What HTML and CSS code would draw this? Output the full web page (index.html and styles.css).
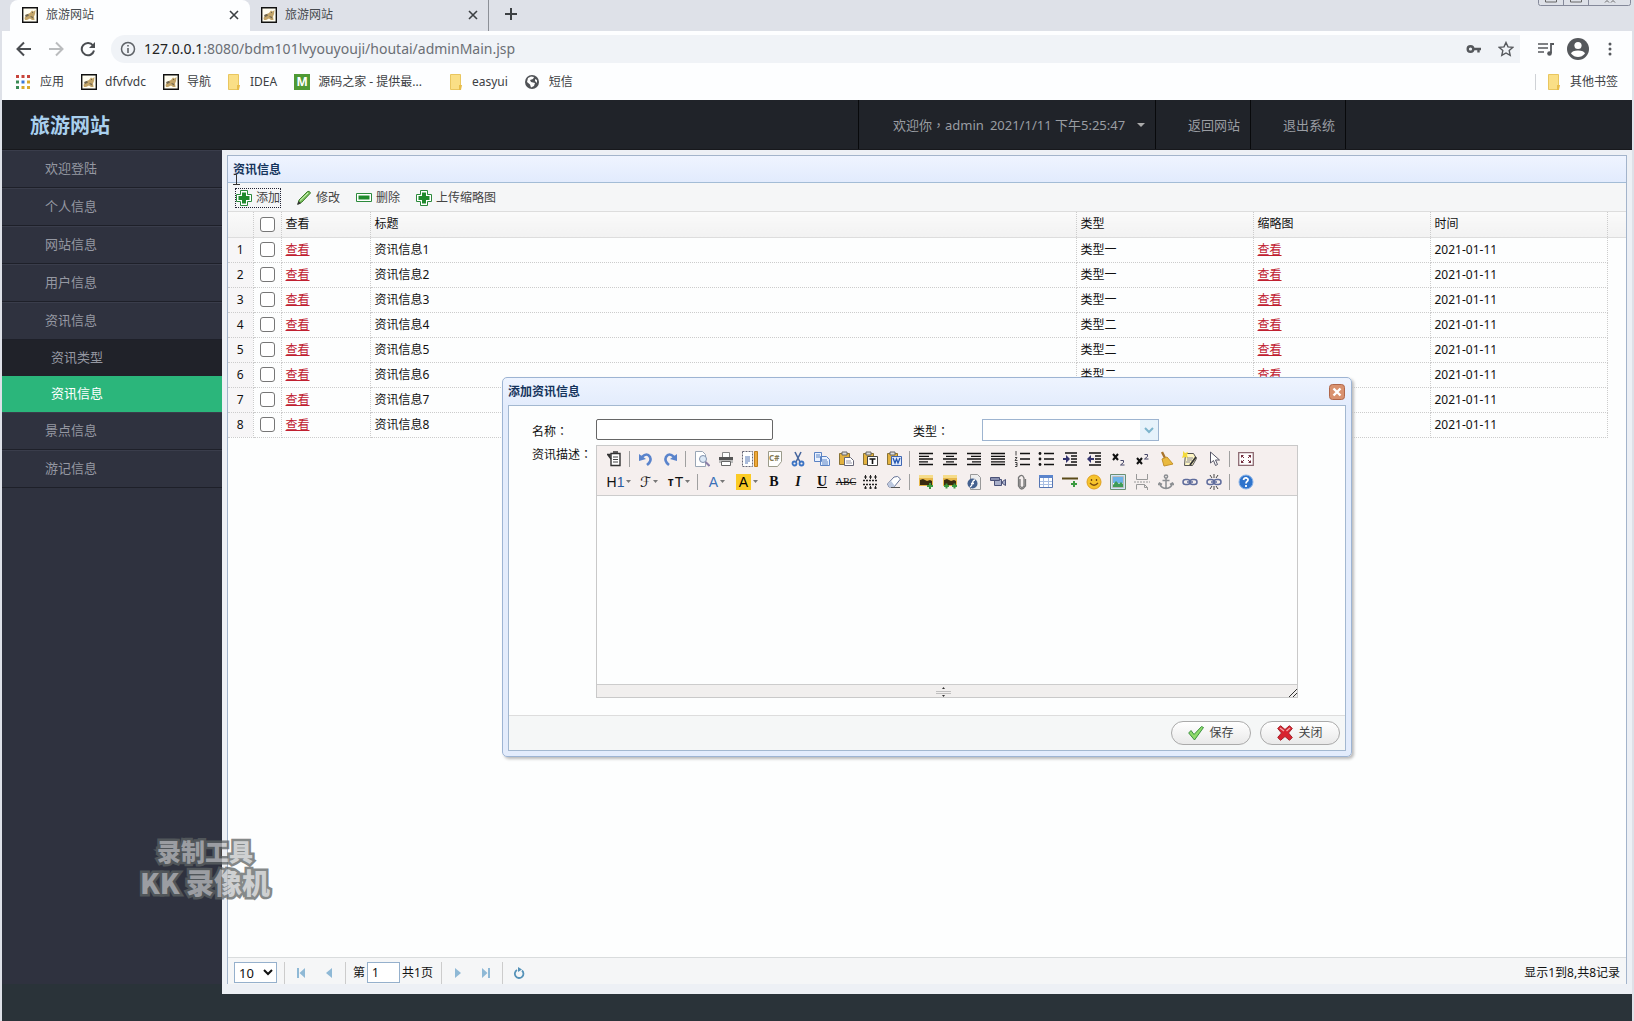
FILE: index.html
```html
<!DOCTYPE html>
<html lang="zh-CN">
<head>
<meta charset="utf-8">
<title>旅游网站</title>
<link rel="stylesheet" href="styles.css">
</head>
<body>
<svg class="defs" aria-hidden="true">
  <symbol id="cat" viewBox="0 0 16 16"><path fill="#fffdf0" stroke="#111" stroke-width="1.4" d="M.7.7h14.6v14.6H.7z"/><path fill="#c2a468" d="M2.500 11l2-3.500L8 6l2-2.500 1.500 1L13.500 3 13 7l-1 2.500.5 3.500h-2.500l-2-1.500-3 1.500h-2z"/><path fill="#6d6450" d="M3 8l3-1 1 1.500-3 1.500zM10 5h1v1h-1zM8 9l2.500.5 1 2-1.500-.5z"/></symbol>
  <symbol id="folder" viewBox="0 0 12 16"><path fill="#fadf86" stroke="#e9c65f" d="M.5.5h10v15H.5z"/><path fill="#e8bd4a" d="M9 11h3l-1 5H9z"/></symbol>
  <symbol id="close" viewBox="0 0 10 10"><path stroke="#3c4043" stroke-width="1.600" d="M1 1l8 8M9 1L1 9"/></symbol>
  <symbol id="add" viewBox="0 0 16 16"><path fill="#fff" stroke="#2c8a3c" d="M4.500.5h7v4h4v7h-4v4h-7v-4h-4v-7h4z"/><path fill="#1f8a2c" d="M6 2.500h4V6h3.500v4H10v3.500H6V10H2.500V6H6z"/></symbol>
  <symbol id="list" viewBox="0 0 16 16"><path stroke="#111" stroke-width="1.300" d="M6 2.500h10M6 8h10M6 13.500h10"/></symbol>
  <symbol id="caret" viewBox="0 0 5 3"><path fill="#777" d="M0 0h5L2.500 3z"/></symbol>
  <symbol id="clip" viewBox="0 0 16 16"><path fill="#e3b23f" stroke="#8a7335" d="M1.500 2.500h10v11h-10z"/><path fill="#ddd" stroke="#666" d="M4 1h5v3H4z"/></symbol>
  <symbol id="chain" viewBox="0 0 16 16"><g fill="none" stroke="#5f6c9c" stroke-width="1.500"><rect x="1" y="5.500" width="7" height="5" rx="2.500"/><rect x="8" y="5.500" width="7" height="5" rx="2.500"/><path d="M5 8h6"/></g></symbol>
  <symbol id="pic" viewBox="0 0 16 16"><path fill="#e8b84a" d="M1 1h14v11H1z"/><path fill="#f6dc8a" d="M1 1h14v3H1z"/><path fill="#3a2c12" d="M2 6l3-1 4 2 3-1 2 1v4H2z"/></symbol>
</svg>

<div class="browser">
  <div class="tabs">
    <div class="tab tab-on"><svg class="i16"><use href="#cat"/></svg><span>旅游网站</span><button class="plain" aria-label="关闭标签页"><svg class="i10"><use href="#close"/></svg></button></div>
    <div class="tab"><svg class="i16"><use href="#cat"/></svg><span>旅游网站</span><button class="plain" aria-label="关闭标签页"><svg class="i10"><use href="#close"/></svg></button></div>
    <button class="plain newtab" aria-label="新标签页"><svg width="14" height="14" viewBox="0 0 14 14"><path stroke="#3c4043" stroke-width="2" d="M7 1v12M1 7h12"/></svg></button>
    <svg class="winctl" width="94" height="6" viewBox="0 0 94 6" fill="none" stroke="#85899a"><path d="M.5 0v3.500q0 2 2 2h88q2 0 2-2V0M25.500 0v5M50.500 0v5"/><path stroke="#666" d="M7.500 0v2h11V0M32.500 0v2h11V0M67 2.500l2-2 2 2M73 2.500l2-2 2 2"/></svg>
  </div>
  <div class="navbar">
    <button class="plain" aria-label="后退"><svg width="16" height="16" viewBox="0 0 16 16" fill="none" stroke="#4a4d51" stroke-width="2"><path d="M15 8H2M8 1.500L1.500 8 8 14.500"/></svg></button>
    <button class="plain" aria-label="前进"><svg width="16" height="16" viewBox="0 0 16 16" fill="none" stroke="#babcbe" stroke-width="2"><path d="M1 8h13M8 1.500L14.500 8 8 14.500"/></svg></button>
    <button class="plain" aria-label="重新加载"><svg width="16" height="16" viewBox="0 0 16 16"><path fill="none" stroke="#4a4d51" stroke-width="2" d="M13 4.500A6.200 6.200 0 1 0 14 9.500"/><path fill="#4a4d51" d="M15 1v6H9z"/></svg></button>
    <div class="address">
      <svg width="16" height="16" viewBox="0 0 16 16"><circle cx="8" cy="8" r="6.500" fill="none" stroke="#5f6368" stroke-width="1.500"/><path fill="#5f6368" d="M7.200 7h1.600v5H7.200zM7.200 4h1.600v1.600H7.200z"/></svg>
      <span class="url"><b>127.0.0.1</b>:8080/bdm101lvyouyouji/houtai/adminMain.jsp</span>
      <svg width="16" height="16" viewBox="0 0 16 16"><g fill="none" stroke="#55585c" stroke-width="2.400"><circle cx="4.500" cy="8" r="2.800"/><path d="M7 8h8M12.500 8v3.500"/></g></svg>
      <svg width="16" height="16" viewBox="0 0 16 16"><path fill="none" stroke="#55585c" stroke-width="1.400" d="M8 1.500l2 4.400 4.700.5-3.500 3.200 1 4.800L8 12l-4.200 2.400 1-4.800L1.300 6.400 6 5.900z"/></svg>
    </div>
    <svg class="media" width="16" height="16" viewBox="0 0 16 16"><path stroke="#55585c" stroke-width="1.500" d="M0 3h10M0 7h10M0 11h6"/><path fill="none" stroke="#55585c" stroke-width="1.800" d="M16 3h-3v9"/><circle cx="11.500" cy="12.500" r="2.300" fill="#55585c"/></svg>
    <svg width="22" height="22" viewBox="0 0 22 22"><circle cx="11" cy="11" r="11" fill="#55585c"/><circle cx="11" cy="7.500" r="3.600" fill="#fff"/><path fill="#fff" d="M4 15.500q1-3 7-3t7 3q-3 3.500-7 3.500t-7-3.500z"/></svg>
    <svg width="4" height="16" viewBox="0 0 4 16" fill="#55585c"><circle cx="2" cy="3" r="1.500"/><circle cx="2" cy="8" r="1.500"/><circle cx="2" cy="13" r="1.500"/></svg>
  </div>
  <div class="bookmarks">
    <a href="#"><svg width="14" height="14" viewBox="0 0 14 14"><path fill="#c8443c" d="M0 0h3v3H0zM5.500 0h3v3h-3zM11 0h3v3h-3z"/><path fill="#3a8a55" d="M0 5.500h3v3H0z"/><path fill="#3b78d8" d="M5.500 5.500h3v3h-3z"/><path fill="#d9a92c" d="M11 5.500h3v3h-3zM5.500 11h3v3h-3zM11 11h3v3h-3z"/><path fill="#3a8a55" d="M0 11h3v3H0z"/></svg><span>应用</span></a>
    <a href="#" class="tight"><svg class="i16"><use href="#cat"/></svg>dfvfvdc</a>
    <a href="#" class="tight"><svg class="i16"><use href="#cat"/></svg>导航</a>
    <a href="#"><svg class="fold"><use href="#folder"/></svg>IDEA</a>
    <a href="#" class="tight"><span class="mlogo">M</span>源码之家 - 提供最...</a>
    <a href="#" class="far"><svg class="fold"><use href="#folder"/></svg>easyui</a>
    <a href="#"><svg width="14" height="14" viewBox="0 0 14 14"><circle cx="7" cy="7" r="7" fill="#505357"/><path fill="#fff" d="M3 3l3-1.500L9 2 8 4 5 5l1 2 4 1-1 3-3 1.500-1-3L2 7zM10 4l2 1v3l-2-2z"/></svg>短信</a>
    <a href="#" class="other"><svg class="fold"><use href="#folder"/></svg>其他书签</a>
  </div>
</div>

<div class="app">
  <header class="top">
    <h1>旅游网站</h1>
    <nav>
      <a href="#" class="user"><span>欢迎你<span lang="zh-TW" class="mid">，</span>admin</span><span>2021/1/11 下午5:25:47</span><svg width="8" height="4" viewBox="0 0 8 4"><path fill="#aaa" d="M0 0h8L4 4z"/></svg></a>
      <a href="#">返回网站</a>
      <a href="#">退出系统</a>
    </nav>
  </header>
  <div class="work">
    <nav class="side">
      <a href="#">欢迎登陆</a>
      <a href="#">个人信息</a>
      <a href="#">网站信息</a>
      <a href="#">用户信息</a>
      <a href="#">资讯信息</a>
      <a href="#" class="sub">资讯类型</a>
      <a href="#" class="sub on">资讯信息</a>
      <a href="#">景点信息</a>
      <a href="#">游记信息</a>
    </nav>
    <main>
      <section class="panel">
        <h2>资讯信息</h2>
        <div class="tools">
          <button class="plain focus"><svg class="i16"><use href="#add"/></svg>添加</button>
          <button class="plain"><svg width="16" height="16" viewBox="0 0 16 16"><path fill="#7ec560" stroke="#3c7a2c" d="M2 14l1-4 8.500-8.500q2-1 3 1.500L6 12z"/><path stroke="#d8f5c8" d="M4 10.500L12 3"/><path fill="#333" d="M1 15l1.500-4L5 13.500z"/></svg>修改</button>
          <button class="plain"><svg width="16" height="16" viewBox="0 0 16 16"><path fill="#fff" stroke="#2c8a3c" d="M.5 3.500h15v8H.5z"/><path fill="#1f8a2c" d="M2.500 5.500h11v4h-11z"/></svg>删除</button>
          <button class="plain"><svg class="i16"><use href="#add"/></svg>上传缩略图</button>
        </div>
        <div class="grid">
          <table>
            <colgroup><col class="c-n"><col class="c-k"><col class="c-v"><col><col class="c-t"><col class="c-t"><col class="c-t"><col class="c-e"></colgroup>
            <thead><tr><th></th><th><input type="checkbox" aria-label="全选"></th><th>查看</th><th>标题</th><th>类型</th><th>缩略图</th><th>时间</th><th></th></tr></thead>
            <tbody>
              <tr><td>1</td><td><input type="checkbox" aria-label="选择1"></td><td><a href="#">查看</a></td><td>资讯信息1</td><td>类型一</td><td><a href="#">查看</a></td><td>2021-01-11</td><td></td></tr>
              <tr><td>2</td><td><input type="checkbox" aria-label="选择2"></td><td><a href="#">查看</a></td><td>资讯信息2</td><td>类型一</td><td><a href="#">查看</a></td><td>2021-01-11</td><td></td></tr>
              <tr><td>3</td><td><input type="checkbox" aria-label="选择3"></td><td><a href="#">查看</a></td><td>资讯信息3</td><td>类型一</td><td><a href="#">查看</a></td><td>2021-01-11</td><td></td></tr>
              <tr><td>4</td><td><input type="checkbox" aria-label="选择4"></td><td><a href="#">查看</a></td><td>资讯信息4</td><td>类型二</td><td><a href="#">查看</a></td><td>2021-01-11</td><td></td></tr>
              <tr><td>5</td><td><input type="checkbox" aria-label="选择5"></td><td><a href="#">查看</a></td><td>资讯信息5</td><td>类型二</td><td><a href="#">查看</a></td><td>2021-01-11</td><td></td></tr>
              <tr><td>6</td><td><input type="checkbox" aria-label="选择6"></td><td><a href="#">查看</a></td><td>资讯信息6</td><td>类型二</td><td><a href="#">查看</a></td><td>2021-01-11</td><td></td></tr>
              <tr><td>7</td><td><input type="checkbox" aria-label="选择7"></td><td><a href="#">查看</a></td><td>资讯信息7</td><td></td><td></td><td>2021-01-11</td><td></td></tr>
              <tr><td>8</td><td><input type="checkbox" aria-label="选择8"></td><td><a href="#">查看</a></td><td>资讯信息8</td><td></td><td></td><td>2021-01-11</td><td></td></tr>
            </tbody>
          </table>
        </div>
        <div class="pager">
          <select aria-label="每页条数"><option>10</option></select>
          <i class="bar"></i>
          <button class="plain" aria-label="首页"><svg width="12" height="12" viewBox="0 0 12 12" fill="#8fb9d6"><path d="M2 1h2v10H2zM10 1v10L4.500 6z"/></svg></button>
          <button class="plain" aria-label="上一页"><svg width="12" height="12" viewBox="0 0 12 12" fill="#8fb9d6"><path d="M9 1v10L3 6z"/></svg></button>
          <i class="bar"></i>
          <label class="page">第<input type="text" value="1" aria-label="页码">共1页</label>
          <i class="bar"></i>
          <button class="plain" aria-label="下一页"><svg width="12" height="12" viewBox="0 0 12 12" fill="#8fb9d6"><path d="M3 1v10l6-5z"/></svg></button>
          <button class="plain" aria-label="末页"><svg width="12" height="12" viewBox="0 0 12 12" fill="#8fb9d6"><path d="M2 1v10l5.500-5zM8 1h2v10H8z"/></svg></button>
          <i class="bar"></i>
          <button class="plain" aria-label="刷新"><svg width="12" height="12" viewBox="0 0 12 12"><path fill="none" stroke="#5592b8" stroke-width="1.800" d="M4 3a4.300 4.300 0 1 0 5 .5"/><path fill="#5592b8" d="M5 0l4 2.500L5 5z"/></svg></button>
          <span class="total">显示1到8,共8记录</span>
        </div>
        <svg class="ibeam" width="7" height="11" viewBox="0 0 7 11" fill="none" stroke="#333"><path d="M1 .5h2.500v10M0 10.500h7"/></svg>
      </section>

      <div class="overlay">
        <form class="dialog" role="dialog" aria-labelledby="dlg">
          <div class="dhead"><h3 id="dlg">添加资讯信息</h3><button type="button" class="plain" aria-label="关闭"><svg width="16" height="16" viewBox="0 0 16 16"><rect x=".5" y=".5" width="15" height="15" rx="3" fill="#d9926f" stroke="#b0674a"/><path stroke="#fff" stroke-width="2.400" d="M4.500 4.500l7 7M11.500 4.500l-7 7"/></svg></button></div>
          <div class="dbody">
            <div class="fields">
              <label for="name">名称<span lang="zh-TW" class="mid">：</span></label>
              <input id="name" type="text">
              <label for="kind">类型<span lang="zh-TW" class="mid">：</span></label>
              <div class="combo"><input id="kind" type="text"><button type="button" class="plain" aria-label="展开"><svg width="10" height="7" viewBox="0 0 10 7"><path fill="none" stroke="#7db4cc" stroke-width="2" d="M1 1l4 4 4-4"/></svg></button></div>
              <label for="desc">资讯描述<span lang="zh-TW" class="mid">：</span></label>
              <div class="editor">
                <div class="ebar">
                  <div class="erow">
                    <svg viewBox="0 0 16 16"><path fill="#fff" stroke="#333" stroke-width="1.400" d="M5 2.500h9v12H5z"/><path fill="none" stroke="#333" stroke-width="1.300" d="M7 1h5M1 3.500h3v3M2 4l3 4"/><path stroke="#444" d="M7 6h5M7 8.500h5M7 11h5"/></svg>
                    <i></i>
                    <svg viewBox="0 0 16 16"><path fill="none" stroke="#5a84cc" stroke-width="2.600" d="M4 6q5-5 8 0 2 4-3 8"/><path fill="#5a84cc" d="M1 3v7l7-2z"/></svg>
                    <svg viewBox="0 0 16 16"><path fill="none" stroke="#5a84cc" stroke-width="2.600" d="M12 6Q7 1 4 6q-2 4 3 8"/><path fill="#5a84cc" d="M15 3v7L8 8z"/></svg>
                    <i></i>
                    <svg viewBox="0 0 16 16"><path fill="#fff" stroke="#9aa6b5" d="M1.500.5h7l3 3v12h-10z"/><circle cx="9" cy="8" r="3.500" fill="#dce9f7" stroke="#7f90ab"/><path stroke="#8c7fa8" stroke-width="2" d="M11.500 11l4 4"/></svg>
                    <svg viewBox="0 0 16 16"><path fill="#fff" stroke="#888" d="M4.500 1.500h7v5h-7z"/><path fill="#555" d="M1 6h14v4H1z"/><path fill="#bbb" d="M1 9h14v3H1z"/><path fill="#fff" stroke="#666" d="M3.500 10.500h9v4h-9z"/></svg>
                    <svg viewBox="0 0 16 16"><path fill="#fff" stroke="#667" stroke-dasharray="2 1" d="M.5.5h10v15H.5z"/><path stroke="#5577b5" d="M3 6h5M3 8h5M3 10h5M3 12h3"/><path fill="#eda93a" stroke="#c07f1b" d="M12.500.5h3v15h-3z"/></svg>
                    <svg viewBox="0 0 16 16"><path fill="#fff" stroke="#9b9b8b" d="M2.500.5h13v10l-4 5h-9z"/><text x="3" y="10" font-size="8" font-weight="bold" fill="#857a55">C#</text></svg>
                    <svg viewBox="0 0 16 16"><path fill="none" stroke="#47669d" stroke-width="1.600" d="M5 1l5 10M11 1L6 11"/><g fill="none" stroke="#3c74c4" stroke-width="1.800"><circle cx="4.500" cy="12.500" r="2"/><circle cx="11.500" cy="12.500" r="2"/></g></svg>
                    <svg viewBox="0 0 16 16"><path fill="#eaf2ff" stroke="#5b83c4" d="M.5 1.500h7v9h-7zM6.500 5.500h6l3 3v6h-9z"/><path stroke="#5b83c4" d="M2 4h4M2 6h4M8 9h5M8 11h6M8 13h6"/></svg>
                    <svg viewBox="0 0 16 16"><use href="#clip"/><path fill="#fff" stroke="#667" d="M6.500 6.500h6l3 3v5h-9z"/><path stroke="#99a" d="M8 10h5M8 12h6"/></svg>
                    <svg viewBox="0 0 16 16"><use href="#clip"/><path fill="#fff" stroke="#444" d="M5.500 5.500h10v9h-10z"/><path stroke="#111" stroke-width="1.600" d="M7.500 8h6M10.500 8v5"/></svg>
                    <svg viewBox="0 0 16 16"><use href="#clip"/><path fill="#dfe9fb" stroke="#3f66b2" d="M5.500 5.500h10v9h-10z"/><path fill="none" stroke="#2456b0" stroke-width="1.300" d="M7 7l2 5 1.500-4L12 12l2-5"/></svg>
                    <i></i>
                    <svg viewBox="0 0 16 16" stroke="#111" stroke-width="1.300"><path d="M1 2.500h14M1 5.300h10M1 8h14M1 10.800h9M1 13.500h14"/></svg>
                    <svg viewBox="0 0 16 16" stroke="#111" stroke-width="1.300"><path d="M1 2.500h14M4 5.300h8M1 8h14M4 10.800h8M1 13.500h14"/></svg>
                    <svg viewBox="0 0 16 16" stroke="#111" stroke-width="1.300"><path d="M1 2.500h14M5 5.300h10M1 8h14M6 10.800h9M1 13.500h14"/></svg>
                    <svg viewBox="0 0 16 16" stroke="#111" stroke-width="1.300"><path d="M1 2.500h14M1 5.300h14M1 8h14M1 10.800h14M1 13.500h14"/></svg>
                    <svg viewBox="0 0 16 16"><use href="#list"/><path fill="none" stroke="#333" stroke-width=".9" d="M2 0v4.500M1 6.500h2L1 9.500h2.500M1 11.500h2v4H1M1.500 13.500H3"/></svg>
                    <svg viewBox="0 0 16 16"><use href="#list"/><g fill="#111"><circle cx="2" cy="2.500" r="1.400"/><circle cx="2" cy="8" r="1.400"/><circle cx="2" cy="13.500" r="1.400"/></g></svg>
                    <svg viewBox="0 0 16 16"><path stroke="#111" stroke-width="1.300" d="M3 2h12M9 5h6M9 8h6M9 11h6M3 14h12"/><path fill="#33336e" d="M1 7h3V4l4 4-4 4V9H1z"/></svg>
                    <svg viewBox="0 0 16 16"><path stroke="#111" stroke-width="1.300" d="M3 2h12M9 5h6M9 8h6M9 11h6M3 14h12"/><path fill="#33336e" d="M8 7H5V4L1 8l4 4V9h3z"/></svg>
                    <svg viewBox="0 0 16 16" fill="none"><path stroke="#111" stroke-width="2" d="M3 3l5 6M8 3L3 9"/><path stroke="#446" d="M10.500 9.500h3v2l-3 2.500h4"/></svg>
                    <svg viewBox="0 0 16 16" fill="none"><path stroke="#111" stroke-width="2" d="M3 7l5 6M8 7l-5 6"/><path stroke="#446" d="M10.500 3.500h3v2L10.500 8h4"/></svg>
                    <svg viewBox="0 0 16 16"><path stroke="#a8742c" stroke-width="2.400" d="M4 1l3 6"/><path fill="#e9b93e" stroke="#c4912a" d="M4 8l5-2 6 7-9 2z"/></svg>
                    <svg viewBox="0 0 16 16"><path fill="#fff7c4" stroke="#555" d="M3.500 2.500h8l3 5-4 7h-8z"/><path fill="#f3da3c" d="M1 0l2 2 3-1-1 3 1 3-3-1-3 1 1-3z"/><path stroke="#333" stroke-width="1.800" d="M14 6l-6 8"/><path stroke="#889" d="M5 7h6M5 9h5M4 11h4"/></svg>
                    <svg viewBox="0 0 16 16"><path fill="#fff" stroke="#556" d="M4.500 1v11l3-2.500 2 5 2-1-2-4.500h4z"/></svg>
                    <i></i>
                    <svg viewBox="0 0 16 16"><path fill="#fff" stroke="#8d6a72" stroke-width="1.300" d="M.7 1.700h14.600v12.600H.7z"/><path fill="#753040" d="M3 4h3L3 7zM13 4h-3l3 3zM3 12h3L3 9zM13 12h-3l3-3z"/><path stroke="#753040" d="M4 5l2 2M12 5l-2 2M4 11l2-2M12 11l-2-2"/></svg>
                  </div>
                  <div class="erow">
                    <span class="menu">H<em>1</em><svg><use href="#caret"/></svg></span>
                    <span class="menu script">ℱ<svg><use href="#caret"/></svg></span>
                    <span class="menu"><small>т</small>T<svg><use href="#caret"/></svg></span>
                    <i></i>
                    <span class="menu blue">A<svg><use href="#caret"/></svg></span>
                    <span class="menu"><mark>A</mark><svg><use href="#caret"/></svg></span>
                    <span class="fmt">B</span>
                    <span class="fmt it">I</span>
                    <span class="fmt un">U</span>
                    <span class="fmt abc">ABC</span>
                    <svg viewBox="0 0 16 16" stroke="#222"><path stroke-width="1.400" stroke-dasharray="2 1" d="M1 6.500h15M1 10.500h15"/><path d="M3.500 1v4M8.500 1v4M13.500 1v4M3.500 12v3M8.500 12v3M13.500 12v3M2 3h3M7 3h3M12 3h3M2 14h3M7 14h3M12 14h3"/></svg>
                    <svg viewBox="0 0 16 16"><path fill="#fff" stroke="#667396" d="M1.500 10L8 3q4-2 6.500 2L8 13H3z"/><path fill="#bcc8df" d="M2 10l3-3 4 5-1 1H3z"/><path stroke="#555" d="M5 13.500h9"/></svg>
                    <i></i>
                    <svg viewBox="0 0 16 16"><use href="#pic"/><path stroke="#3b9a3f" stroke-width="2" d="M9 12h6M12 9v6"/></svg>
                    <svg viewBox="0 0 16 16"><use href="#pic"/><path stroke="#3b9a3f" stroke-width="2" d="M2 12h5M4.500 9.500v5M10 12h5M12.500 9.500v5"/></svg>
                    <svg viewBox="0 0 16 16"><path fill="#eee" stroke="#999" d="M4.500.5h7l3 3v12h-10z"/><circle cx="6.500" cy="9.500" r="5" fill="#44618f"/><path fill="none" stroke="#fff" stroke-width="1.300" d="M9 6q-2 0-2.500 3T4 13M5 9.500h3"/></svg>
                    <svg viewBox="0 0 16 16"><path fill="#a9afc9" stroke="#4b5278" d="M4.500 5.500h7v6h-7zM12.500 7.500l3-2v6l-3-2z"/><path fill="#8a90b0" stroke="#4b5278" d="M.5 3.500h9v3h-9z"/></svg>
                    <svg viewBox="0 0 16 16"><path fill="none" stroke="#777" stroke-width="1.300" d="M6 5v7q2 3 4 0V4Q8-1 4.500 3.500V12q3 6 7 0V5"/></svg>
                    <svg viewBox="0 0 16 16"><path fill="#fff" stroke="#5676b3" d="M1.500 1.500h13v12h-13z"/><path fill="#5c85cc" d="M1 1h14v3H1z"/><path stroke="#a9bfe3" d="M2 7.500h12M2 10.500h12M5.500 4v9M10.500 4v9"/></svg>
                    <svg viewBox="0 0 16 16"><path stroke="#5a4a18" stroke-width="2" d="M0 4.500h16"/><path stroke="#3b9a3f" stroke-width="2" d="M9 10h6M12 7v6"/></svg>
                    <svg viewBox="0 0 16 16"><circle cx="8" cy="8" r="7" fill="#f6c32c" stroke="#e0a020"/><path fill="none" stroke="#7a4b10" stroke-width="1.300" d="M4 9q4 4.500 8 0M5.500 5v2M10.500 5v2"/></svg>
                    <svg viewBox="0 0 16 16"><path fill="#cfe7fa" stroke="#6c8e72" d="M.5.5h15v15H.5z"/><path fill="#fff" stroke="#bbb" d="M2.500 2.500h11v11h-11z"/><path fill="#6cb3e8" d="M3 3h10v6H3z"/><path fill="#3f9c57" d="M3 11l3-4 3 3 2-2 2 2v3H3z"/></svg>
                    <svg viewBox="0 0 16 16" fill="none" stroke="#999"><path d="M2.500 0v5.500h11V0M2.500 15.500v-5h8l3 3v2.500M10.500 10.500v3h3"/><path stroke-dasharray="2 1" d="M0 8h16"/></svg>
                    <svg viewBox="0 0 16 16" fill="none" stroke="#8b8e92" stroke-width="1.500"><circle cx="8" cy="2.500" r="1.600"/><path d="M8 4v10M4.500 6.500h7M1.500 9q1 5 6.500 5.500Q13.500 14 14.500 9M0 11l1.500-2L4 10.500M16 11l-1.500-2-2.500 1.500"/></svg>
                    <svg viewBox="0 0 16 16"><use href="#chain"/></svg>
                    <svg viewBox="0 0 16 16"><use href="#chain"/><path stroke="#444" d="M8 0v4M4 1l2 3M12 1l-2 3M8 12v4M4 15l2-3M12 15l-2-3"/></svg>
                    <i></i>
                    <svg viewBox="0 0 16 16"><circle cx="8" cy="8" r="7" fill="#2f74cc" stroke="#88b2e8"/><path fill="none" stroke="#fff" stroke-width="1.800" d="M5.500 6Q6 3.500 8.500 4q2.500 1 1 3Q8 8 8 9.500M8 11v2"/></svg>
                  </div>
                </div>
                <textarea id="desc"></textarea>
                <div class="estat"><svg class="grip" width="15" height="10" viewBox="0 0 15 10"><path stroke="#aaa" d="M0 4.500h15M0 6.500h15" stroke-width=".7"/><path fill="#333" d="M7.500 0L9 2H6zM6 8h3l-1.500 2z"/></svg><svg width="8" height="8" viewBox="0 0 8 8"><path stroke="#333" d="M0 8l8-8M4 8l4-4"/></svg></div>
              </div>
            </div>
            <div class="dfoot">
              <button type="button" class="pill"><svg width="16" height="16" viewBox="0 0 16 16"><path fill="#8ddb6a" stroke="#3c9140" d="M.7 8L3 5.500l3 4L13.500 1.500l2 1L6.500 15z"/></svg>保存</button>
              <button type="button" class="pill"><svg width="16" height="16" viewBox="0 0 16 16"><path fill="#d8232e" stroke="#a3202a" d="M.7 3.500L3.500.7 8 4.500 12.500.7l2.800 2.800L11.500 8l3.800 4.500-2.800 2.800L8 11.500l-4.500 3.800-2.800-2.800L4.500 8z"/><path stroke="#f3a0a3" stroke-width="1.500" d="M3 3l4 3M13 3L9.500 6"/></svg>关闭</button>
            </div>
          </div>
        </form>
      </div>
    </main>
  </div>
  <div class="watermark"><span>录制工具</span><strong>KK 录像机</strong></div>
</div>
</body>
</html>
```
FILE: styles.css
```css
* { box-sizing: border-box; }
body {
  margin: 0;
  min-height: 100vh;
  display: flex;
  flex-direction: column;
  padding: 0 2px;
  background: #dee1e8;
  font: 12px/16px "Noto Sans", "Noto Sans CJK SC", sans-serif;
  color: #111;
}
.defs { position: absolute; width: 0; height: 0; }
svg { display: block; flex: none; }
a { color: inherit; text-decoration: none; }
button, input, select, textarea { font: inherit; color: inherit; margin: 0; }
.plain { display: flex; align-items: center; background: none; border: 0; padding: 0; }
.i16 { width: 16px; height: 16px; }
.i10 { width: 10px; height: 10px; }
.fold { width: 12px; height: 16px; }
/* full-width punctuation centred in its cell */
.mid { font-family: "Noto Sans CJK TC", sans-serif; }

/* browser chrome */
.browser { background: #fdfeff; }
.tabs { display: flex; height: 31px; background: #dee1e8; padding-left: 8px; position: relative; }
.tab { width: 240px; padding: 0 11px 2px 12px; display: flex; align-items: center; gap: 8px; color: #45494d; }
.tab + .tab { width: 239px; padding-left: 11px; padding-right: 10px; border-right: 1px solid #8c9097; }
.tab .plain { margin-left: auto; }
.tab-on { background: #fdfeff; border-radius: 8px 8px 0 0; }
.newtab { padding: 0 15px 3px; }
.winctl { position: absolute; right: 0; top: 0; }
.navbar { display: flex; align-items: center; height: 36px; padding: 0 20px 0 14px; gap: 16px; }
.address { flex: 1; display: flex; align-items: center; gap: 16px; height: 28px; margin: 0 2px 0 -1px; padding: 0 6px 0 9px; background: #f0f3f7; border-radius: 14px 0 0 14px; }
.navbar > svg:last-child { margin-left: 3px; }
.media { margin-right: -3px; }
.url { flex: 1; margin-left: -8px; font: 14px/20px "Noto Sans", sans-serif; color: #6b6f75; }
.url b { font-weight: normal; color: #222; }
.bookmarks { display: flex; align-items: center; height: 33px; padding: 0 14px 3px; gap: 17px; color: #3c4043; }
.bookmarks a { display: flex; align-items: center; gap: 10px; }
.bookmarks .tight { gap: 8px; }
.bookmarks .far { margin-left: 11px; }
.bookmarks .other { margin-left: auto; border-left: 1px solid #cfd2d6; padding-left: 12px; }
.mlogo { width: 16px; height: 16px; background: #4f9a34; color: #fff; font-weight: bold; text-align: center; }

/* application */
.app { flex: 1; display: flex; flex-direction: column; background: #2a3339; padding-bottom: 27px; position: relative; }
.top { display: flex; height: 50px; background: #202329; border-bottom: 1px solid #17181c; }
.top h1 { margin: 0; padding-left: 28px; font-size: 20px; line-height: 52px; color: #a9d0ee; }
.top nav { display: flex; margin-left: auto; margin-right: 286px; border-left: 1px solid #08090b; font-size: 13px; line-height: 50px; color: #9a9da3; }
.top nav a { display: flex; align-items: center; width: 95px; padding: 0 10px 0 32px; border-right: 1px solid #08090b; }
.top nav .user { width: 297px; padding-left: 34px; gap: 6px; }
.top nav svg { margin-left: auto; }
.work { flex: 1; display: grid; grid-template-columns: 220px minmax(0, 1fr); }
.side { background: #2f323f; margin-bottom: 10px; font-size: 13px; color: #9598a2; }
.side a { display: block; height: 38px; line-height: 34px; padding-left: 43px; border-bottom: 1px solid #1e2029; border-top: 1px solid #3a3d4b; }
.side .sub { height: 36px; padding-left: 49px; background: #202229; border: 0; }
.side .on { background: #2bb67b; color: #fff; }
main { position: relative; display: flex; flex-direction: column; background: #edf0f5; padding: 5px 5px 10px; }
.panel { flex: 1; display: flex; flex-direction: column; position: relative; border: 1px solid #a3b4cb; border-bottom: 0; background: #fdfefe; }
.panel h2 { margin: 0; height: 27px; padding-left: 5px; font-size: 12px; line-height: 28px; color: #15345c; border-bottom: 1px solid #a3bcd6; background: linear-gradient(#eff4ff, #e2ebfd); }
.tools { display: flex; align-items: center; gap: 16px; height: 29px; padding: 1px 0 0 8px; background: #f5f6f7; border-bottom: 1px solid #ddd; color: #444; }
.tools .plain { gap: 4px; height: 18px; }
.focus { outline: 1px dotted #223; }
.grid { flex: 1; }
table { width: 100%; table-layout: fixed; border-collapse: collapse; }
.c-n { width: 25px; } .c-k { width: 28px; } .c-v { width: 89px; } .c-t { width: 177px; } .c-e { width: 19px; }
th, td { height: 25px; padding: 0 4px; text-align: left; font-weight: normal; border-right: 1px dotted #ccc; border-bottom: 1px dotted #ccc; }
th { background: linear-gradient(#fafafa, #f2f2f2); border-bottom-style: solid; border-bottom-color: #ddd; }
td:first-child { background: #f7f6f7; text-align: center; padding: 0; }
th:last-child, td:last-child { border-right: 0; }
td:last-child { border-bottom: 0; }
td a { color: #c02030; text-decoration: underline; }
input[type=checkbox] { appearance: none; display: block; width: 15px; height: 15px; margin-left: 2px; border: 1px solid #767676; border-radius: 3px; background: #fff; }
.pager { display: flex; align-items: center; height: 27px; padding: 3px 6px 0; background: #f5f6f7; border-top: 1px solid #d9dcdd; }
.pager select { width: 43px; height: 21px; margin-right: 5px; padding: 0; font-size: 13px; border: 1px solid #95b0cc; background: #fff; }
.bar { width: 1px; height: 22px; margin: 0 2px; background: #ccc; }
.pager .plain { width: 28px; justify-content: center; }
.page { display: flex; align-items: center; gap: 2px; margin: 0 6px 0 5px; }
.page input { width: 33px; height: 21px; padding: 0 4px; border: 1px solid #95b0cc; background: #fff; }
.total { margin-left: auto; }
.ibeam { position: absolute; left: 5px; top: 18px; }

/* dialog */
.overlay { position: absolute; inset: 0 0 10px; display: grid; place-items: center; }
.dialog { width: 850px; padding: 0 5px 5px; border: 1px solid #9db4d3; border-radius: 5px; background: linear-gradient(#eef4ff, #e3ecfc 28px); box-shadow: 2px 2px 3px #bbb; }
.dhead { display: flex; align-items: center; justify-content: space-between; height: 27px; padding-right: 1px; }
.dhead h3 { margin: 0; font-size: 12px; color: #15345c; }
.dbody { border: 1px solid #a3b8d0; background: #fdfefe; }
.fields { display: grid; grid-template-columns: 64px 317px 69px 1fr; row-gap: 4px; height: 309px; padding: 13px 47px 0 23px; align-content: start; }
.fields label { line-height: 24px; white-space: nowrap; }
.fields > label:nth-of-type(3) { line-height: 12px; }
#name { width: 177px; height: 21px; border: 1px solid #666; border-radius: 2px; background: #fff; }
.combo { display: flex; width: 177px; height: 22px; border: 1px solid #9db4d0; background: #fff; }
.combo input { flex: 1; min-width: 0; border: 0; background: none; }
.combo button { width: 18px; justify-content: center; background: #e6f2fb; }
.editor { grid-column: 2 / 5; border: 1px solid #c9c9c9; margin-top: -3px; }
.ebar { height: 50px; padding: 1px 5px; background: #f5efee; border-bottom: 1px solid #ccc; }
.erow { display: flex; align-items: center; height: 23px; }
.erow + .erow { padding-left: 2px; }
.erow > svg { width: 16px; height: 16px; margin: 0 4px; }
.erow i { width: 1px; height: 16px; margin: 0 4px 0 3px; background: #a0a0a0; }
.menu { display: flex; align-items: center; justify-content: center; width: 30px; gap: 1px; font: 14px/16px "Liberation Sans", sans-serif; }
.menu svg { width: 5px; height: 3px; margin-left: 1px; }
.menu em { font-style: normal; color: #2b5b9c; margin-left: -1px; }
.menu small { font-size: 12px; font-weight: bold; }
.script { font-family: "DejaVu Sans", serif; }
.blue { color: #3b70b8; }
.menu mark { width: 15px; background: #fbcb25; text-align: center; }
.fmt { width: 24px; text-align: center; font: bold 14px/16px "Liberation Serif", serif; }
.it { font-style: italic; }
.un { text-decoration: underline; }
.abc { font-size: 10px; font-weight: normal; text-decoration: line-through; }
textarea { display: block; width: 100%; height: 188px; border: 0; resize: none; background: #fdfefe; }
.estat { display: flex; align-items: flex-end; justify-content: flex-end; height: 13px; border-top: 1px solid #ccc; background: #f1efee; }
.grip { margin: 0 auto; }
.dfoot { display: flex; justify-content: flex-end; align-items: flex-start; gap: 9px; height: 35px; padding: 5px; border-top: 1px solid #ddd; background: #f5f7f7; }
.pill { display: flex; align-items: center; justify-content: center; gap: 5px; width: 80px; height: 24px; padding: 0; color: #444; border: 1px solid #aaa; border-radius: 12px; background: linear-gradient(#fff, #e9e9e9); }

/* recorder watermark */
.watermark { position: absolute; left: 138px; bottom: 122px; text-align: center; opacity: .75; color: #bfc1c3; font: 900 24px/28px "Noto Sans CJK SC", sans-serif; -webkit-text-stroke: 5px #5d6263; paint-order: stroke fill; }
.watermark span, .watermark strong { display: block; }
.watermark strong { font-size: 28px; line-height: 34px; font-weight: 900; }
```
